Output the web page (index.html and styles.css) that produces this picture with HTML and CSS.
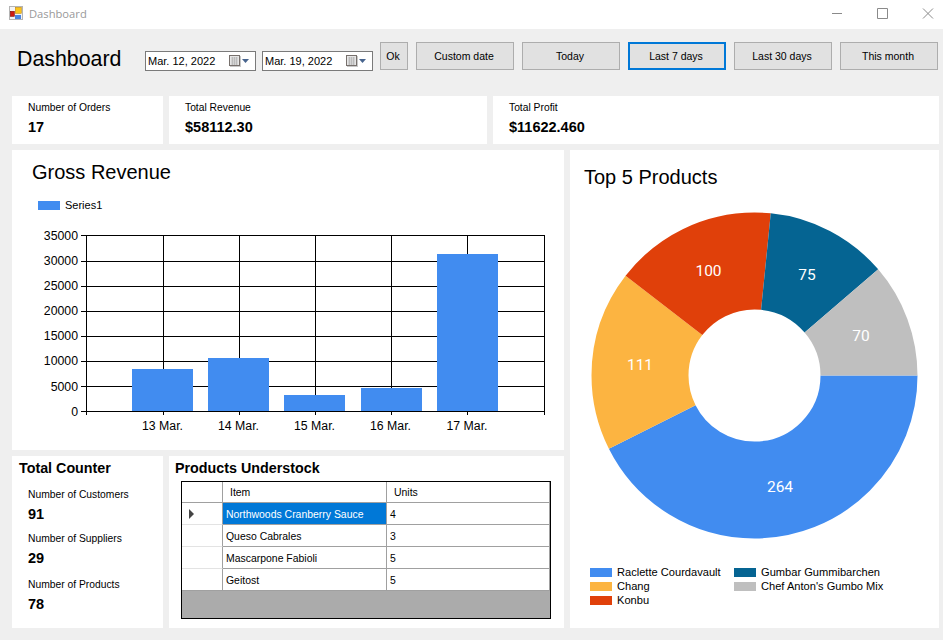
FILE: index.html
```html
<!DOCTYPE html>
<html>
<head>
  <meta charset="UTF-8">
  <title>Dashboard</title>
  <link rel="stylesheet" href="styles.css">
</head>
<body>
  <div class="titlebar">
    <svg class="app-icon" width="14" height="14" viewBox="0 0 14 14">
      <rect x="0.5" y="0.5" width="13" height="13" fill="#f4f4f4" stroke="#b4b4b4"/>
      <rect x="1.3" y="5.3" width="4" height="5" fill="#d01a10" stroke="#7c120c" stroke-width="0.6"/>
      <rect x="6.3" y="1.3" width="6" height="6" fill="#fcc419" stroke="#c08a14" stroke-width="0.6"/>
      <rect x="6" y="9" width="6" height="4" fill="#4a86e0"/>
    </svg>
    <span class="window-title">Dashboard</span>
    <div class="window-buttons">
      <svg width="102" height="13" viewBox="0 0 102 13">
        <path class="window-glyph" d="M0 5.5H10M45.5 .5H55.5V10.5H45.5ZM91 .5L101 10.5M101 .5L91 10.5"/>
      </svg>
    </div>
  </div>

  <div class="toolbar">
    <h1 class="page-title">Dashboard</h1>
    <div class="date-picker">
      <span>Mar. 12, 2022</span>
      <svg class="date-icon" width="21" height="13" viewBox="0 0 21 13">
        <rect x="1" y="1" width="11" height="11" fill="#c8c8c8"/>
        <rect x="0.5" y="0.5" width="10" height="10" fill="#e6e6e6" stroke="#77706c"/>
        <path d="M2 3H9M2 5H9M2 7H9M2 9H9M3.5 2V10M5.5 2V10M7.5 2V10" stroke="#b0b0b0" stroke-width="0.7" fill="none"/>
        <path d="M13 4H20L16.5 8Z" fill="#47648e"/>
      </svg>
    </div>
    <div class="date-picker">
      <span>Mar. 19, 2022</span>
      <svg class="date-icon" width="21" height="13" viewBox="0 0 21 13">
        <rect x="1" y="1" width="11" height="11" fill="#c8c8c8"/>
        <rect x="0.5" y="0.5" width="10" height="10" fill="#e6e6e6" stroke="#77706c"/>
        <path d="M2 3H9M2 5H9M2 7H9M2 9H9M3.5 2V10M5.5 2V10M7.5 2V10" stroke="#b0b0b0" stroke-width="0.7" fill="none"/>
        <path d="M13 4H20L16.5 8Z" fill="#47648e"/>
      </svg>
    </div>
    <button class="btn btn-ok">Ok</button>
    <button class="btn">Custom date</button>
    <button class="btn">Today</button>
    <button class="btn btn-focus">Last 7 days</button>
    <button class="btn">Last 30 days</button>
    <button class="btn">This month</button>
  </div>

  <div class="stats">
    <div class="card stat">
      <div class="label">Number of Orders</div>
      <div class="value">17</div>
    </div>
    <div class="card stat">
      <div class="label">Total Revenue</div>
      <div class="value">$58112.30</div>
    </div>
    <div class="card stat">
      <div class="label">Total Profit</div>
      <div class="value">$11622.460</div>
    </div>
  </div>

  <div class="main">
    <div class="left-col">
      <div class="card revenue">
        <h2 class="chart-title">Gross Revenue</h2>
        <div class="series-legend"><i class="swatch c1"></i>Series1</div>
        <svg class="bar-chart" width="552" height="215" viewBox="12 225 552 215">
          <path class="grid-line" d="M81 235.5H545M81 261.5H545M81 286.5H545M81 311.5H545M81 336.5H545M81 361.5H545M81 386.5H545M81 411.5H545"/>
          <path class="grid-line" d="M86.5 235V415M163.5 235V415M239.5 235V415M315.5 235V415M391.5 235V415M467.5 235V415M544.5 235V415"/>
          <rect class="bar" x="132" y="369" width="61" height="42"/>
          <rect class="bar" x="208" y="358" width="61" height="53"/>
          <rect class="bar" x="284" y="395" width="61" height="16"/>
          <rect class="bar" x="361" y="388" width="61" height="23"/>
          <rect class="bar" x="437" y="254" width="61" height="157"/>
          <g class="y-labels">
            <text x="78" y="240">35000</text>
            <text x="78" y="265">30000</text>
            <text x="78" y="290">25000</text>
            <text x="78" y="315">20000</text>
            <text x="78" y="340">15000</text>
            <text x="78" y="365">10000</text>
            <text x="78" y="391">5000</text>
            <text x="78" y="416">0</text>
          </g>
          <g class="x-labels">
            <text x="162.5" y="430">13 Mar.</text>
            <text x="238.5" y="430">14 Mar.</text>
            <text x="314.5" y="430">15 Mar.</text>
            <text x="390.5" y="430">16 Mar.</text>
            <text x="467" y="430">17 Mar.</text>
          </g>
        </svg>
      </div>

      <div class="bottom-row">
        <div class="card counters">
          <h3 class="panel-title">Total Counter</h3>
          <div class="counter">
            <div class="label">Number of Customers</div>
            <div class="value">91</div>
          </div>
          <div class="counter">
            <div class="label">Number of Suppliers</div>
            <div class="value">29</div>
          </div>
          <div class="counter">
            <div class="label">Number of Products</div>
            <div class="value">78</div>
          </div>
        </div>

        <div class="card understock">
          <h3 class="panel-title">Products Understock</h3>
          <div class="grid-frame">
            <table class="data-grid">
              <colgroup>
                <col class="col-head"><col class="col-item"><col class="col-units">
              </colgroup>
              <tr class="header-row">
                <th class="row-head"></th><th>Item</th><th>Units</th>
              </tr>
              <tr>
                <th class="row-head"><i class="row-arrow"></i></th>
                <td class="selected">Northwoods Cranberry Sauce</td><td>4</td>
              </tr>
              <tr>
                <th class="row-head"></th><td>Queso Cabrales</td><td>3</td>
              </tr>
              <tr>
                <th class="row-head"></th><td>Mascarpone Fabioli</td><td>5</td>
              </tr>
              <tr>
                <th class="row-head"></th><td>Geitost</td><td>5</td>
              </tr>
            </table>
          </div>
        </div>
      </div>
    </div>

    <div class="card products">
      <h2 class="chart-title">Top 5 Products</h2>
      <svg class="pie-chart" width="369" height="340" viewBox="570 205 369 340">
        <g transform="translate(754.5 375.5)">
          <circle class="slice s1" r="114.5" pathLength="620" stroke-dasharray="264 356"/>
          <circle class="slice s2" r="114.5" pathLength="620" stroke-dasharray="111 509" stroke-dashoffset="-264"/>
          <circle class="slice s3" r="114.5" pathLength="620" stroke-dasharray="100 520" stroke-dashoffset="-375"/>
          <circle class="slice s4" r="114.5" pathLength="620" stroke-dasharray="75 545" stroke-dashoffset="-475"/>
          <circle class="slice s5" r="114.5" pathLength="620" stroke-dasharray="70 550" stroke-dashoffset="-550"/>
        </g>
        <g class="pie-labels">
          <text x="780" y="491.5">264</text>
          <text x="640" y="369.5">111</text>
          <text x="708.5" y="275.5">100</text>
          <text x="807" y="279.5">75</text>
          <text x="861" y="340.5">70</text>
        </g>
      </svg>
      <div class="pie-legend">
        <div class="legend-item"><i class="swatch c1"></i>Raclette Courdavault</div>
        <div class="legend-item"><i class="swatch c4"></i>Gumbar Gummibarchen</div>
        <div class="legend-item"><i class="swatch c2"></i>Chang</div>
        <div class="legend-item"><i class="swatch c5"></i>Chef Anton's Gumbo Mix</div>
        <div class="legend-item"><i class="swatch c3"></i>Konbu</div>
      </div>
    </div>
  </div>
</body>
</html>
```

FILE: styles.css
```css
* {
  box-sizing: border-box;
}
html, body {
  margin: 0;
  height: 640px;
  overflow: hidden;
}
body {
  font-family: "Liberation Sans", Arial, sans-serif;
  font-size: 10.3px;
  color: #000;
  background: #efefef;
}
h1, h2, h3 {
  margin: 0;
  font-weight: normal;
}

/* window chrome */
.titlebar {
  display: flex;
  align-items: center;
  height: 29px;
  padding-left: 9px;
  background: #fff;
}
.app-icon {
  margin-bottom: 3px;
}
.window-title {
  margin: 0 0 2px 6px;
  font-family: "Open Sans", sans-serif;
  font-size: 11.2px;
  color: #999;
}
.window-buttons {
  display: flex;
  margin-left: auto;
  margin-right: 9px;
}
.window-glyph {
  fill: none;
  stroke: #8a8a8a;
}

/* top bar */
.toolbar {
  display: flex;
  align-items: flex-start;
  height: 67px;
  padding: 13px 0 0 17px;
}
.page-title {
  flex: none;
  width: 128px;
  margin-top: 4px;
  font-size: 21.33px;
  line-height: 26px;
}
.date-picker {
  flex: none;
  display: flex;
  align-items: center;
  justify-content: space-between;
  width: 111px;
  height: 20px;
  margin: 9px 6px 0 0;
  padding: 0 5px 0 2px;
  font-size: 11px;
  background: #fff;
  border: 1px solid #7a7a7a;
}
.date-picker + .date-picker {
  margin-right: 7px;
}
.date-icon {
  flex: none;
}
.btn {
  flex: none;
  width: 98px;
  height: 28px;
  margin-right: 8px;
  padding: 0 2px 0 0;
  font: inherit;
  font-size: 10.5px;
  color: #000;
  background: #e1e1e1;
  border: 1px solid #adadad;
}
.btn-ok {
  width: 28px;
}
.btn-focus {
  border: 2px solid #0078d7;
}

/* cards */
.card {
  background: #fff;
}
.stats {
  display: flex;
  gap: 6px;
  height: 48px;
  margin: 0 4px 6px 12px;
}
.stat {
  padding: 5px 0 0 16px;
}
.stat:nth-child(1) {
  width: 151px;
}
.stat:nth-child(2) {
  width: 318px;
}
.stat:nth-child(3) {
  width: 446px;
}
.label {
  line-height: 14px;
}
.value {
  margin-top: 2px;
  font-size: 14.5px;
  font-weight: bold;
  line-height: 20px;
}

.main {
  display: flex;
  gap: 6px;
  margin: 0 4px 0 12px;
}
.left-col {
  display: flex;
  flex-direction: column;
  gap: 6px;
  width: 552px;
}
.chart-title {
  font-size: 20px;
  line-height: 24px;
}

/* gross revenue */
.revenue {
  height: 300px;
}
.revenue .chart-title {
  padding: 10px 0 0 20px;
}
.series-legend {
  display: flex;
  align-items: center;
  height: 14px;
  margin: 14px 0 0 26px;
  font-size: 11px;
}
.swatch {
  flex: none;
  width: 22px;
  height: 9px;
  margin-right: 5px;
}
.c1 { background: #418cf0; }
.c2 { background: #fcb441; }
.c3 { background: #e0400a; }
.c4 { background: #056492; }
.c5 { background: #bfbfbf; }
.bar-chart {
  display: block;
  margin-top: 13px;
}
.grid-line {
  fill: none;
  stroke: #000;
  stroke-width: 1;
}
.bar {
  fill: #418cf0;
}
.y-labels text {
  font-size: 12.3px;
  text-anchor: end;
}
.x-labels text {
  font-size: 12.3px;
  text-anchor: middle;
}

/* bottom panels */
.bottom-row {
  display: flex;
  gap: 6px;
  height: 172px;
}
.panel-title {
  font-size: 14.3px;
  font-weight: bold;
  line-height: 18px;
  padding-top: 3px;
}
.counters {
  width: 151px;
  padding-left: 7px;
}
.counter {
  margin: 8px 0 0 9px;
}
.panel-title + .counter {
  margin-top: 11px;
}
.counter:last-child {
  margin-top: 10px;
}
.understock {
  width: 395px;
  padding-left: 6px;
}
.grid-frame {
  width: 370px;
  height: 138px;
  margin: 4px 0 0 6px;
  background: #ababab;
  border: 1px solid #000;
}
.data-grid {
  width: 368px;
  table-layout: fixed;
  border-spacing: 0;
  font-size: 10.45px;
  background: #fff;
}
.col-head {
  width: 41px;
}
.col-item {
  width: 164px;
}
.data-grid th,
.data-grid td {
  height: 22px;
  padding: 2px 0 0 3px;
  font-weight: normal;
  text-align: left;
  border-right: 1px solid #a0a0a0;
  border-bottom: 1px solid #a0a0a0;
}
.data-grid .header-row th {
  height: 21px;
  padding: 0 0 0 7px;
}
.data-grid .row-head {
  padding: 0 0 0 7px;
  border-bottom-color: #e3e3e3;
}
.header-row .row-head {
  border-bottom-color: #a0a0a0;
}
.data-grid tr:last-child .row-head {
  border-bottom-color: #a0a0a0;
}
.data-grid td.selected {
  color: #fff;
  background: #0078d7;
}
.row-arrow {
  display: block;
  width: 0;
  height: 0;
  border-top: 5px solid transparent;
  border-bottom: 5px solid transparent;
  border-left: 5px solid #444;
}

/* top products */
.products {
  width: 369px;
  height: 478px;
}
.products .chart-title {
  padding: 15px 0 0 14px;
}
.pie-chart {
  display: block;
  margin-top: 16px;
}
.slice {
  fill: none;
  stroke-width: 97;
}
.s1 { stroke: #418cf0; }
.s2 { stroke: #fcb441; }
.s3 { stroke: #e0400a; }
.s4 { stroke: #056492; }
.s5 { stroke: #bfbfbf; }
.pie-labels text {
  font-family: Roboto, sans-serif;
  font-size: 15.5px;
  fill: #fff;
  text-anchor: middle;
}
.pie-legend {
  display: grid;
  grid-template-columns: 144px 1fr;
  grid-auto-rows: 14px;
  margin: 20px 0 0 20px;
}
.legend-item {
  display: flex;
  align-items: center;
  font-size: 11.1px;
}
```
